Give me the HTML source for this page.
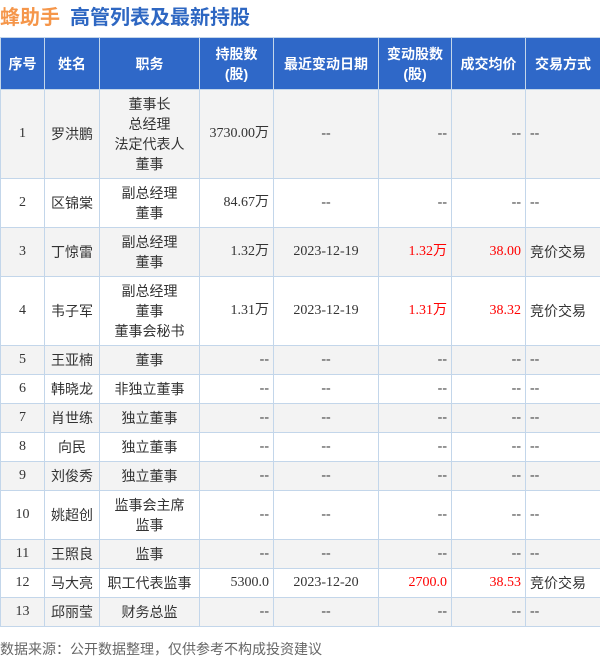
<!DOCTYPE html>
<html><head><meta charset="utf-8"><style>
*{margin:0;padding:0;box-sizing:border-box}
body{width:600px;height:657px;background:#fff;font-family:"Liberation Serif","Noto Sans CJK SC",serif;color:#333;position:relative;overflow:hidden}
.t{position:absolute;left:0;top:1px;font:bold 20px "Liberation Sans","Noto Sans CJK SC",sans-serif;white-space:nowrap}
.t .a{color:#f5964a}.t .b{color:#2e67c2;margin-left:10px}
table{position:absolute;left:0;top:37px;border-collapse:collapse;table-layout:fixed;width:600px;font-size:14px}
td,th{border:1px solid #c3d6ea;padding:0 4px;line-height:20px}
th{background:#2f68c8;color:#fff;font:bold 14px "Liberation Sans","Noto Sans CJK SC",sans-serif;text-align:center;line-height:20px}
tr:nth-child(even) td{background:#f3f3f3}
tr:nth-child(odd) td{background:#fff}
.c{text-align:center}.r{text-align:right}.l{text-align:left}
.s{font-family:"Liberation Sans","Noto Sans CJK SC",sans-serif;font-size:14px}
.red{color:#f00}
.f{position:absolute;left:0;top:639px;font:14px "Liberation Sans","Noto Sans CJK SC",sans-serif;color:#666}
</style></head><body>
<div class="t"><span class="a">蜂助手</span><span class="b">高管列表及最新持股</span></div>
<table>
<colgroup><col style="width:44px"><col style="width:55px"><col style="width:100px"><col style="width:74px"><col style="width:105px"><col style="width:73px"><col style="width:74px"><col style="width:75px"></colgroup>
<tr style="height:52px"><th>序号</th><th>姓名</th><th>职务</th><th>持股数<br>(股)</th><th>最近变动日期</th><th>变动股数<br>(股)</th><th>成交均价</th><th>交易方式</th></tr>
<tr style="height:89px"><td class="c">1</td><td class="s c">罗洪鹏</td><td class="s c">董事长<br>总经理<br>法定代表人<br>董事</td><td class="r">3730.00万</td><td class="c">--</td><td class="r">--</td><td class="r">--</td><td class="l">--</td></tr>
<tr style="height:49px"><td class="c">2</td><td class="s c">区锦棠</td><td class="s c">副总经理<br>董事</td><td class="r">84.67万</td><td class="c">--</td><td class="r">--</td><td class="r">--</td><td class="l">--</td></tr>
<tr style="height:49px"><td class="c">3</td><td class="s c">丁惊雷</td><td class="s c">副总经理<br>董事</td><td class="r">1.32万</td><td class="c">2023-12-19</td><td class="r red">1.32万</td><td class="r red">38.00</td><td class="l s">竞价交易</td></tr>
<tr style="height:69px"><td class="c">4</td><td class="s c">韦子军</td><td class="s c">副总经理<br>董事<br>董事会秘书</td><td class="r">1.31万</td><td class="c">2023-12-19</td><td class="r red">1.31万</td><td class="r red">38.32</td><td class="l s">竞价交易</td></tr>
<tr style="height:29px"><td class="c">5</td><td class="s c">王亚楠</td><td class="s c">董事</td><td class="r">--</td><td class="c">--</td><td class="r">--</td><td class="r">--</td><td class="l">--</td></tr>
<tr style="height:29px"><td class="c">6</td><td class="s c">韩晓龙</td><td class="s c">非独立董事</td><td class="r">--</td><td class="c">--</td><td class="r">--</td><td class="r">--</td><td class="l">--</td></tr>
<tr style="height:29px"><td class="c">7</td><td class="s c">肖世练</td><td class="s c">独立董事</td><td class="r">--</td><td class="c">--</td><td class="r">--</td><td class="r">--</td><td class="l">--</td></tr>
<tr style="height:29px"><td class="c">8</td><td class="s c">向民</td><td class="s c">独立董事</td><td class="r">--</td><td class="c">--</td><td class="r">--</td><td class="r">--</td><td class="l">--</td></tr>
<tr style="height:29px"><td class="c">9</td><td class="s c">刘俊秀</td><td class="s c">独立董事</td><td class="r">--</td><td class="c">--</td><td class="r">--</td><td class="r">--</td><td class="l">--</td></tr>
<tr style="height:49px"><td class="c">10</td><td class="s c">姚超创</td><td class="s c">监事会主席<br>监事</td><td class="r">--</td><td class="c">--</td><td class="r">--</td><td class="r">--</td><td class="l">--</td></tr>
<tr style="height:29px"><td class="c">11</td><td class="s c">王照良</td><td class="s c">监事</td><td class="r">--</td><td class="c">--</td><td class="r">--</td><td class="r">--</td><td class="l">--</td></tr>
<tr style="height:29px"><td class="c">12</td><td class="s c">马大亮</td><td class="s c">职工代表监事</td><td class="r">5300.0</td><td class="c">2023-12-20</td><td class="r red">2700.0</td><td class="r red">38.53</td><td class="l s">竞价交易</td></tr>
<tr style="height:29px"><td class="c">13</td><td class="s c">邱丽莹</td><td class="s c">财务总监</td><td class="r">--</td><td class="c">--</td><td class="r">--</td><td class="r">--</td><td class="l">--</td></tr>
</table>
<div class="f">数据来源：公开数据整理，仅供参考不构成投资建议</div>
</body></html>
